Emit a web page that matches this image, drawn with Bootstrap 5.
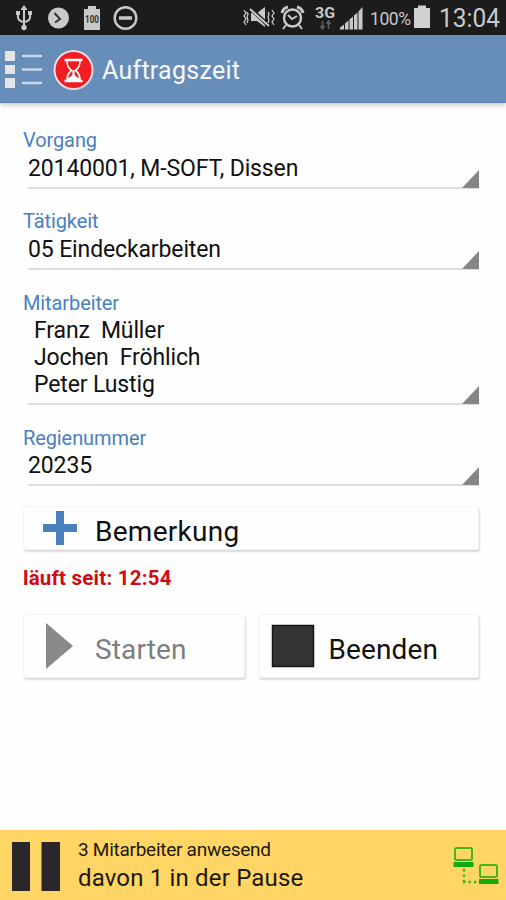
<!DOCTYPE html>
<html lang="de">
<head>
<meta charset="utf-8">
<meta name="viewport" content="width=device-width, initial-scale=1">
<title>Auftragszeit</title>
<link href="https://cdn.jsdelivr.net/npm/bootstrap@5.3.0/dist/css/bootstrap.min.css" rel="stylesheet">
<style>
body{font-family:Roboto,"Liberation Sans",sans-serif;background:#fefefe;color:#111}
.screen{width:506px;height:900px;overflow:hidden}
svg{display:block;flex:none}
.status{height:35px;background:#1c1c1c;color:#c9c9c9}
.appbar{height:68px;background:#678db9;border-bottom:1px solid #5d82b0;box-shadow:0 2px 5px rgba(0,0,0,.22)}
.apptitle{font-size:25px;line-height:30px;color:#f6f9fc;letter-spacing:.26px;margin:4px 0 0 8px}
.content{padding:25px 27px 0 23px}
.field{margin-bottom:20.8px}
.flabel{font-size:20px;line-height:24px;color:#4a7fc3;letter-spacing:-.1px}
.fvalue{margin-left:5px;border-bottom:2px solid #dedede;font-size:23px;line-height:27px;letter-spacing:-.13px;padding:2.5px 0 5px;white-space:pre}
.fvalue svg{position:absolute;right:0;bottom:-1px}
.people{padding-left:6px}
.tile{background:#fefefe;border:1px solid #f4f4f4;border-radius:3px;box-shadow:1px 2px 2px rgba(0,0,0,.14);color:#111;font-size:28px;line-height:32px;padding:0;letter-spacing:.12px}
.tile:disabled{opacity:1;background:#fefefe;border-color:#f4f4f4;color:#7e7e7e}
.note{height:44px;margin-top:-1.2px;letter-spacing:.27px}
.action{height:64px}
.actions{gap:13px}
.since{font-size:20.5px;line-height:24px;letter-spacing:.22px;color:#d20a11;margin:16px 0 24px}
.foot{height:70px;background:#ffd565;color:#1d1908}
.foot1{font-size:19px;line-height:24px;letter-spacing:-.27px}
.foot2{font-size:24px;line-height:32px;letter-spacing:.17px}
</style>
</head>
<body>
<div class="screen d-flex flex-column">
  <header>
    <div class="status d-flex">
      <svg width="240" height="35" fill="none" stroke="#c9c9c9" stroke-width="2">
        <path d="M24 10V27M18 13V17Q18 21 24 22Q30 21 30 17V13"/>
        <path d="M24 5l3.500 5h-7z" fill="#c9c9c9" stroke="none"/>
        <circle cx="24" cy="27.500" r="2.700" fill="#c9c9c9" stroke="none"/>
        <path d="M16 11h4v4h-4zM28 11h4v4h-4z" fill="#c9c9c9" stroke="none"/>
        <circle cx="58.500" cy="18" r="10.500" fill="#c9c9c9" stroke="none"/>
        <path d="M54.500 13l5.500 6-5 3.500" stroke="#333"/>
        <path d="M84 9h4V6h8v3h4v21H84z" fill="#c9c9c9" stroke="none"/>
        <text x="92" y="23" text-anchor="middle" font-size="10" font-weight="700" textLength="14" lengthAdjust="spacingAndGlyphs" fill="#333" stroke="none">100</text>
        <circle cx="125.500" cy="18" r="10.800" stroke-width="2.400"/><path d="M119 18h13" stroke-width="3.500"/>
      </svg>
      <svg width="266" height="35" fill="none" stroke="#c9c9c9" stroke-width="2">
        <path d="M11 13h6l8-6v20l-8-6h-6z" fill="#c9c9c9" stroke="none"/>
        <path d="M9 7l21 20" stroke="#1c1c1c" stroke-width="4"/><path d="M10 9l19 17"/>
        <path d="M4 10l2 3-2 3 2 3-2 3 2 3M7 12l1 2-1 3 1 3-1 3M32 10l2 3-2 3 2 3-2 3 2 3M28 12l1 2-1 3 1 3-1 3" stroke-width="1.300"/>
        <circle cx="52.500" cy="18" r="8.500" stroke-width="2.500"/><path d="M48 15l4 4 5-3M46 25l-3 4M59 25l3 4"/>
        <path d="M42 13q1-5 6-6M63 13q-1-5-6-6" stroke-width="3"/>
        <text x="75" y="18" font-size="15" font-weight="700" textLength="20" lengthAdjust="spacingAndGlyphs" fill="#c9c9c9" stroke="none">3G</text>
        <path d="M82.500 21v7m-2-2l2 3 2-3M88.500 29v-7m-2 2l2-3 2 3" stroke="#616161" stroke-width="1.500"/>
        <path d="M100 29.500v-2l4-3v5zM105 29.500v-6l3.500-3v9zM109.500 29.500v-10l3.500-3v13zM114 29.500v-14l3.500-3v17zM118.500 29.500v-18l4-4.500v22.500z" fill="#c9c9c9" stroke="none"/>
        <text x="130" y="25" font-size="17.500" textLength="41" fill="#c9c9c9" stroke="none">100%</text>
        <path d="M174 8h4V5.500h8V8h4v20h-16z" fill="#d0d0d0" stroke="none"/>
        <text x="199" y="26.500" font-size="25" textLength="61" lengthAdjust="spacingAndGlyphs" fill="#c9c9c9" stroke="none">13:04</text>
      </svg>
    </div>
    <nav class="appbar d-flex align-items-center position-relative">
      <svg width="94" height="68">
        <path d="M5 16h10v10H5zM5 30h10v9H5zM5 43h10v10H5z" fill="#e3e5e6"/>
        <path d="M23 21h18M23 34.500h18M23 48h18" stroke="#c9d6e6" stroke-width="2.400" stroke-linecap="round"/>
        <circle cx="73.500" cy="35" r="20" fill="#eadfe2"/><circle cx="73.500" cy="35" r="18" fill="#f21c22"/>
        <path d="M64.500 25h18M64.500 46h18" stroke="#fff" stroke-width="2.500"/>
        <path d="M67 26q0 6 4.500 9.500Q67 39 67 45h13q0-6-4.500-9.500Q80 32 80 26" fill="none" stroke="#fff" stroke-width="1.600"/>
        <path d="M67.500 45v-2q4-1 5-4v-4h2v4q1 3 5 4v2z" fill="#fff"/>
      </svg>
      <div class="apptitle">Auftragszeit</div>
    </nav>
  </header>
  <main class="content flex-grow-1">
    <div class="field"><div class="flabel">Vorgang</div><div class="fvalue position-relative">20140001, M-SOFT, Dissen<svg width="17" height="18"><path d="M17 0v18H0z" fill="#858585"/></svg></div></div>
    <div class="field"><div class="flabel">Tätigkeit</div><div class="fvalue position-relative">05 Eindeckarbeiten<svg width="17" height="18"><path d="M17 0v18H0z" fill="#858585"/></svg></div></div>
    <div class="field"><div class="flabel">Mitarbeiter</div><div class="fvalue people position-relative"><div>Franz  Müller</div><div>Jochen  Fröhlich</div><div>Peter Lustig</div><svg width="17" height="18"><path d="M17 0v18H0z" fill="#858585"/></svg></div></div>
    <div class="field"><div class="flabel">Regienummer</div><div class="fvalue position-relative">20235<svg width="17" height="18"><path d="M17 0v18H0z" fill="#858585"/></svg></div></div>
    <button type="button" class="btn tile note d-flex align-items-center w-100">
      <svg width="71" height="42"><path d="M32 4h8v13h13v8H40v13h-8V25H19v-8h13z" fill="#4a80bd"/></svg><span class="pt-2">Bemerkung</span>
    </button>
    <div class="since fw-bold">läuft seit: 12:54</div>
    <div class="actions d-flex">
      <button type="button" class="btn tile action d-flex align-items-center flex-fill w-50" disabled>
        <svg width="71" height="62"><path d="M22 8l27 23-27 23z" fill="#8a8a8a"/></svg><span class="pt-2">Starten</span>
      </button>
      <button type="button" class="btn tile action d-flex align-items-center flex-fill w-50">
        <svg width="70" height="62"><path d="M13.500 10.500h41v41h-41z" fill="#343434" stroke="#161616" stroke-width="1.500"/></svg><span class="pt-2">Beenden</span>
      </button>
    </div>
  </main>
  <footer class="foot d-flex">
    <svg width="78" height="70"><path d="M12 12h18v49H12zM41.500 12H60v49H41.500z" fill="#29272a"/></svg>
    <div class="pt-2 flex-grow-1"><div class="foot1">3 Mitarbeiter anwesend</div><div class="foot2">davon 1 in der Pause</div></div>
    <svg width="56" height="70" fill="none" stroke="#45b51c" stroke-width="2">
      <rect x="5" y="18" width="17" height="12" rx="1.500"/><rect x="30" y="35" width="17" height="12" rx="1.500"/>
      <path d="M3.500 32h20v5h-20zM29 49h19.500v5H29z" fill="#12ab0d" stroke="none"/>
      <path d="M14 39v14M13 52h15" stroke-width="2.500" stroke-dasharray="2.500 3"/>
    </svg>
  </footer>
</div>
<script src="https://cdn.jsdelivr.net/npm/bootstrap@5.3.0/dist/js/bootstrap.bundle.min.js"></script>
</body>
</html>
